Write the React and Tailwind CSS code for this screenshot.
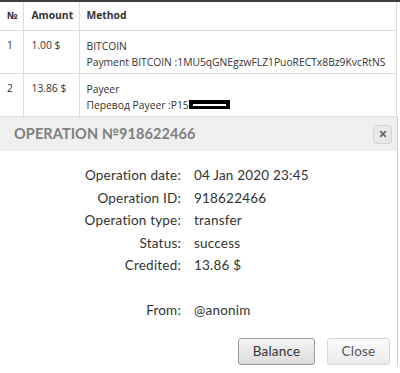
const rows = [
  { label: 'Operation date:', value: '04 Jan 2020 23:45' },
  { label: 'Operation ID:', value: '918622466' },
  { label: 'Operation type:', value: 'transfer' },
  { label: 'Status:', value: 'success' },
  { label: 'Credited:', value: '13.86 $' },
];

const App = () => {
  return (
    <div className="relative h-[373px] w-[400px] overflow-hidden bg-white font-['Open_Sans',sans-serif] text-[10.3px] text-[#333]">
      <div className="border-t-2 border-[#3a3f44]">
        <table className="w-[397px] border-collapse border-r border-[#ddd] whitespace-nowrap">
          <thead>
            <tr className="h-[28px] border-b border-[#ddd] text-left font-bold">
              <th className="w-[23px] border-r border-[#ddd] pl-[7px] font-bold">№</th>
              <th className="w-[56px] border-r border-[#ddd] pl-[8px] font-bold">Amount</th>
              <th className="pl-[7px] font-bold">Method</th>
            </tr>
          </thead>
          <tbody>
            <tr className="h-[43px] border-b border-[#ddd] align-top">
              <td className="border-r border-[#ddd] pl-[7px] pt-[7px]">1</td>
              <td className="border-r border-[#ddd] pl-[8px] pt-[7px]">1.00 $</td>
              <td className="pl-[7px] pt-[7px] leading-[16px]">
                <div>BITCOIN</div>
                <div>Payment BITCOIN :1MU5qGNEgzwFLZ1PuoRECTx8Bz9KvcRtNS</div>
              </td>
            </tr>
            <tr className="h-[43px] border-b border-[#ddd] align-top">
              <td className="border-r border-[#ddd] pl-[7px] pt-[7px]">2</td>
              <td className="border-r border-[#ddd] pl-[8px] pt-[7px]">13.86 $</td>
              <td className="pl-[7px] pt-[7px] leading-[16px]">
                <div>Payeer</div>
                <div className="flex items-center">
                  Перевод Payeer :P15
                  <span className="flex h-[9px] w-[41px] items-center justify-center bg-black">
                    <span className="h-[2px] w-[33px] bg-white" />
                  </span>
                </div>
              </td>
            </tr>
          </tbody>
        </table>
      </div>

      <div className="absolute left-0 top-[117px] w-[398px] border-r border-[#ccc] bg-white font-['Lato',sans-serif]">
        <div className="flex h-[34px] items-center justify-between bg-[#efefef] pl-[14px] pr-[5px]">
          <span className="text-[14.5px] font-bold tracking-[0.1px] text-[#808080]">OPERATION №918622466</span>
          <button className="flex h-[19px] w-[19px] items-center justify-center rounded-[3px] border border-[#d4d4d4] bg-[#e8e8e8]">
            <svg viewBox="0 0 10 10" className="h-[8px] w-[8px]">
              <path d="M1.5 1.5 8.5 8.5M8.5 1.5 1.5 8.5" stroke="#666" strokeWidth="2.2" />
            </svg>
          </button>
        </div>
        <div className="pt-[13px] text-[13.5px] tracking-[0.2px] text-[#333]">
          {rows.map((row) => (
            <div key={row.label} className="flex h-[22.5px] items-center">
              <span className="w-[181px] text-right">{row.label}</span>
              <span className="pl-[13px]">{row.value}</span>
            </div>
          ))}
          <div className="mt-[22.5px] flex h-[22.5px] items-center">
            <span className="w-[181px] text-right">From:</span>
            <span className="pl-[13px]">@anonim</span>
          </div>
          <div className="flex justify-end gap-[12px] pr-[7px] pt-[16px]">
            <button className="h-[27px] w-[77px] rounded-[3px] border border-[#9a9a9a] bg-gradient-to-b from-[#f4f4f4] to-[#dcdcdc] text-[13.5px] text-[#333]">Balance</button>
            <button className="h-[27px] w-[63px] rounded-[3px] border border-[#d6d6d6] bg-gradient-to-b from-[#fafafa] to-[#ececec] text-[13.5px] text-[#555]">Close</button>
          </div>
        </div>
      </div>
    </div>
  );
};

export default App;
